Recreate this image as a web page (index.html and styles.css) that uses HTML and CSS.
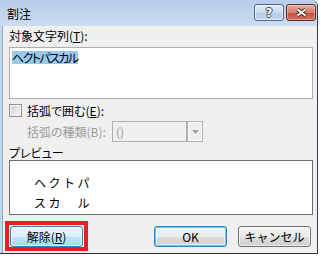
FILE: index.html
```html
<!DOCTYPE html>
<html lang="ja">
<head>
    <meta charset="UTF-8">
    <title>割注</title>
    <link rel="stylesheet" href="styles.css">
</head>
<body>
    <div class="window">
        <div class="titlebar">
            <span class="title">割注</span>
            <div class="caption-buttons">
                <div class="cap-btn help">?</div>
                <div class="cap-btn close">
                    <svg width="13" height="9" viewBox="0 0 13 9">
                        <path d="M2.5 1.5 L10.5 7.5 M10.5 1.5 L2.5 7.5" stroke="#3a2a28" stroke-width="3.8" fill="none"/>
                        <path d="M2.5 1.5 L10.5 7.5 M10.5 1.5 L2.5 7.5" stroke="#ffffff" stroke-width="1.9" fill="none"/>
                    </svg>
                </div>
            </div>
        </div>
        <div class="client">
            <div class="field-label">対象文字列(<u>T</u>):</div>
            <div class="textbox"><span class="sel">ヘクトパスカル</span></div>
            <div class="check-row">
                <span class="checkbox"></span>
                <span>括弧で囲む(<u>E</u>):</span>
            </div>
            <div class="bracket-row">
                <span class="bracket-label">括弧の種類(B):</span>
                <div class="combo">
                    <span class="combo-value">()</span>
                    <span class="combo-btn">
                        <svg width="7" height="4" viewBox="0 0 7 4"><path d="M0 0 H7 L3.5 4 Z" fill="#a3a3a3"/></svg>
                    </span>
                </div>
            </div>
            <div class="field-label preview-label">プレビュー</div>
            <div class="preview">
                <div>ヘクトパ</div>
                <div>スカ　ル</div>
            </div>
            <div class="button-row">
                <div class="highlight">
                    <button class="btn hot">解除(<u>R</u>)</button>
                </div>
                <button class="btn default">OK</button>
                <button class="btn">キャンセル</button>
            </div>
        </div>
    </div>
</body>
</html>
```

FILE: styles.css
```css
body {
    margin: 0;
    background: #ffffff;
    font-family: "Noto Sans CJK JP", "Noto Sans", sans-serif;
    font-size: 12px;
    color: #000000;
    font-feature-settings: "palt";
}
.window {
    width: 317px;
    height: 253px;
    border-right: 1px solid #2f3d4f;
    border-bottom: 1px solid #2e2e2e;
    border-top-right-radius: 6px;
    background: #c4d8ee;
    display: flex;
    flex-direction: column;
}
.titlebar {
    height: 26px;
    flex: none;
    display: flex;
    align-items: flex-start;
    background: linear-gradient(#b6cee9, #cbddf1);
    border-top-right-radius: 6px;
}
.title {
    margin: 6px 0 0 7px;
    line-height: 16px;
}
.caption-buttons {
    margin: 4px 1px 0 auto;
    display: flex;
    gap: 2px;
}
.cap-btn {
    width: 30px;
    height: 17px;
    box-sizing: border-box;
    border: 1px solid #52678a;
    border-radius: 3px;
    display: flex;
    align-items: center;
    justify-content: center;
}
.help {
    background: linear-gradient(#e3edf8 0%, #c9daee 50%, #b5cbe5 51%, #c3d6ec 100%);
    box-shadow: inset 0 0 0 1px rgba(255, 255, 255, 0.6);
    color: #ffffff;
    font-family: "DejaVu Sans", sans-serif;
    font-weight: bold;
    font-size: 12px;
    line-height: 14px;
    text-shadow: 1px 0 #3a4350, -1px 0 #3a4350, 0 1px #3a4350, 0 -1px #3a4350;
}
.close {
    border-color: #5b2b25;
    background: linear-gradient(#e7aa9e 0%, #d87c6a 50%, #c4503d 51%, #d2705c 100%);
    box-shadow: inset 0 0 0 1px rgba(255, 255, 255, 0.35);
}
.client {
    flex: 1;
    margin-left: 2px;
    border-left: 1px solid #90a4bc;
    background: #f0f0f0;
    padding: 2px 4px 0 6px;
}
.field-label {
    line-height: 16px;
}
.textbox {
    margin-top: 3px;
    height: 52px;
    box-sizing: border-box;
    border: 1px solid #abadb3;
    background: #ffffff;
    padding: 1px 2px;
}
.sel {
    display: inline-block;
    line-height: 13px;
    letter-spacing: -1.6px;
    padding-right: 1px;
    background: #99c9ef;
}
.check-row {
    margin-top: 5px;
    height: 13px;
    line-height: 13px;
    display: flex;
    align-items: center;
    gap: 5px;
}
.checkbox {
    width: 13px;
    height: 13px;
    box-sizing: border-box;
    border: 1px solid #8e8f8f;
    background: linear-gradient(135deg, #cfd2d7, #f7f7f7);
    box-shadow: inset 0 0 0 1px #f4f4f4;
}
.bracket-row {
    margin-top: 4px;
    height: 21px;
    padding-left: 18px;
    display: flex;
    align-items: center;
    color: #9a9a9a;
}
.bracket-label {
    width: 85px;
}
.combo {
    width: 91px;
    height: 21px;
    box-sizing: border-box;
    border: 1px solid #b0b0b0;
    display: flex;
}
.combo-value {
    padding-left: 3px;
    line-height: 19px;
}
.combo-btn {
    width: 17px;
    height: 21px;
    box-sizing: border-box;
    border: 1px solid #b0b0b0;
    border-left-width: 2px;
    margin: -1px -1px -1px auto;
    background: #efefef;
    box-shadow: inset 0 0 0 1px #fcfcfc;
    display: flex;
    align-items: center;
    justify-content: center;
}
.preview-label {
    margin-top: 4px;
    line-height: 14px;
}
.preview {
    height: 55px;
    box-sizing: border-box;
    border: 1px solid #6e6e6e;
    background: #ffffff;
    padding: 12px 0 0 24px;
    line-height: 20px;
    letter-spacing: 2.5px;
    font-feature-settings: normal;
}
.button-row {
    margin-top: 6px;
    padding-right: 2px;
    display: flex;
    align-items: flex-start;
}
.highlight {
    margin-left: -4px;
    border: 4px solid #ec1c24;
    padding: 1px 1px 0;
}
.btn {
    width: 73px;
    height: 21px;
    box-sizing: border-box;
    padding: 0;
    border: 1px solid #707070;
    border-radius: 3px;
    background: linear-gradient(#f2f2f2 0%, #ebebeb 50%, #dddddd 51%, #cfcfcf 100%);
    box-shadow: inset 0 0 0 1px rgba(255, 255, 255, 0.7);
    font-family: inherit;
    font-size: 12px;
    line-height: 19px;
    color: #000000;
    display: block;
}
.hot {
    border-color: #3c7fb1;
    background: linear-gradient(#eaf6fd 0%, #d9f0fc 50%, #bee6fd 51%, #a7d9f5 100%);
}
.default {
    margin: 5px 0 0 auto;
    border-color: #3c7fb1;
    box-shadow: inset 0 0 0 1px #4fd2fb, inset 0 0 0 2px rgba(255, 255, 255, 0.5);
}
.default + .btn {
    margin: 5px 0 0 11px;
}
```
